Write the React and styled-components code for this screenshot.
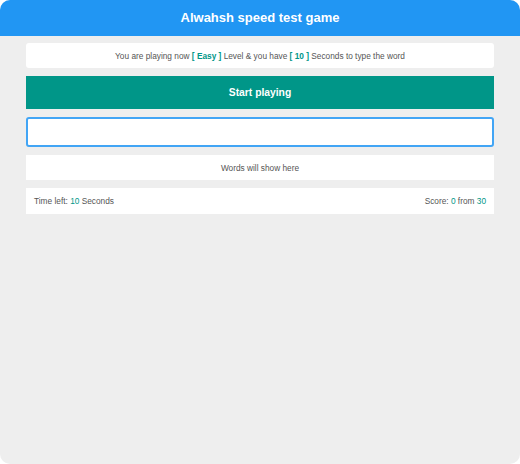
import styled, { createGlobalStyle } from 'styled-components'

const GlobalStyle = createGlobalStyle`
  * {
    box-sizing: border-box;
  }
  body {
    margin: 0;
    background: #fff;
    font-family: Arial, "Liberation Sans", sans-serif;
  }
`

const Page = styled.div`
  height: 464px;
  background: #eee;
  border-radius: 10px;
  overflow: hidden;
`

const Header = styled.h1`
  margin: 0;
  height: 36px;
  line-height: 36px;
  background: #2196f3;
  color: #fff;
  text-align: center;
  font-size: 13px;
  font-weight: bold;
`

const Game = styled.div`
  width: 90%;
  margin: 7px auto 0;
  display: flex;
  flex-direction: column;
  gap: 8px;
`

const Box = styled.div`
  background: #fff;
  height: ${({ h }) => h || 25}px;
  border-radius: ${({ rounded }) => (rounded ? '3px' : '0')};
  font-size: 8.3px;
  color: #555;
  display: flex;
  align-items: center;
  justify-content: ${({ split }) => (split ? 'space-between' : 'center')};
  padding: 0 8px;
`

const Hl = styled.span`
  color: #009688;
  font-weight: ${({ bold }) => (bold ? 'bold' : 'normal')};
`

const StartButton = styled.div`
  height: 33px;
  background: #009688;
  color: #fff;
  font-size: 10.3px;
  font-weight: bold;
  display: flex;
  align-items: center;
  justify-content: center;
  cursor: pointer;
`

const Input = styled.input`
  height: 30px;
  width: 100%;
  border: 2px solid #42a5f5;
  border-radius: 3px;
  outline: none;
  padding: 0 8px;
  font-size: 12px;
`

export default function App() {
  return (
    <>
      <GlobalStyle />
      <Page>
        <Header>Alwahsh speed test game</Header>
        <Game>
          <Box rounded>
            <span>
              You are playing now <Hl bold>[ Easy ]</Hl> Level &amp; you have{' '}
              <Hl bold>[ 10 ]</Hl> Seconds to type the word
            </span>
          </Box>
          <StartButton>Start playing</StartButton>
          <Input type="text" />
          <Box>Words will show here</Box>
          <Box h={26} split>
            <span>
              Time left: <Hl>10</Hl> Seconds
            </span>
            <span>
              Score: <Hl>0</Hl> from <Hl>30</Hl>
            </span>
          </Box>
        </Game>
      </Page>
    </>
  )
}
